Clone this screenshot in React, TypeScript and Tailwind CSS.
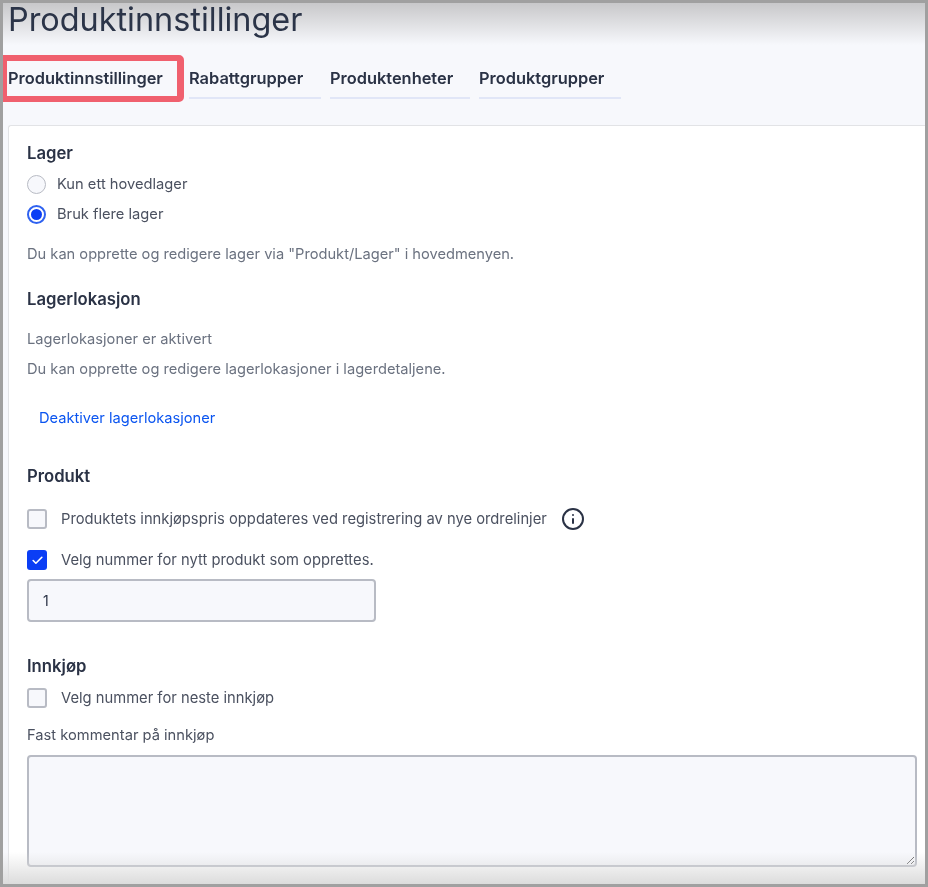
import React from 'react';
import { Check, Info } from 'lucide-react';

const tabs = [
  { label: 'Rabattgrupper', width: 'w-[132px]' },
  { label: 'Produktenheter', width: 'w-[140px]' },
  { label: 'Produktgrupper', width: 'w-[142px]' },
];

const Heading = ({ children, className = '' }: { children: React.ReactNode; className?: string }) => (
  <h2 className={`text-[16.7px] leading-[22px] font-semibold text-[#2a3245] ${className}`}>{children}</h2>
);

const Radio = ({ label, checked = false }: { label: string; checked?: boolean }) => (
  <label className="flex h-[30px] items-center">
    {checked ? (
      <span className="flex h-[19px] w-[19px] items-center justify-center rounded-full border-2 border-[#2f62f0] bg-white">
        <span className="h-[11px] w-[11px] rounded-full bg-[#0b3ef5]" />
      </span>
    ) : (
      <span className="h-[19px] w-[19px] rounded-full border border-[#b8bbc4] bg-[#f7f8fc]" />
    )}
    <span className="ml-[11px] text-[14.7px] text-[#4b5160]">{label}</span>
  </label>
);

const Checkbox = ({ label, checked = false }: { label: string; checked?: boolean }) => (
  <label className="flex items-center">
    {checked ? (
      <span className="flex h-[20px] w-[20px] items-center justify-center rounded-[3px] bg-[#0b3ef5]">
        <Check size={13} strokeWidth={3} className="text-white" />
      </span>
    ) : (
      <span className="h-[20px] w-[20px] rounded-[3px] border-2 border-[#b8bbc4] bg-[#f7f8fc]" />
    )}
    <span className="ml-[14px] text-[14.75px] text-[#4b5160]">{label}</span>
  </label>
);

export default function App() {
  return (
    <div className="relative h-[887px] w-[928px] overflow-hidden border-[3px] border-[#a0a0a0] bg-[#f7f8fc] font-['Inter',sans-serif] blur-[0.5px]">
      {/* fade at top and bottom of the screenshot */}
      <div className="pointer-events-none absolute inset-x-0 top-0 h-[42px] bg-gradient-to-b from-[#c8c8ca] to-[#f7f8fc]" />
      <div className="pointer-events-none absolute inset-x-0 bottom-0 z-10 h-[32px] bg-gradient-to-b from-transparent to-[#dcdcdc]" />

      <h1 className="relative pl-[5px] text-[32.4px] leading-[33px] text-[#2b3448]">Produktinnstillinger</h1>

      <div className="relative mt-[23px] flex h-[40px] pl-[5px]">
        <div className="absolute left-0 top-[-4px] h-[47px] w-[181px] rounded-r-[5px] border-y-[6px] border-r-[7px] border-l-[4px] border-[#f0606e]" />
        <div className="w-[181px] pt-[8px] text-[16.4px] leading-[22px] font-semibold text-[#2a3245]">Produktinnstillinger</div>
        {tabs.map((tab) => (
          <div
            key={tab.label}
            className={`mr-[9px] border-b-2 border-[#e1e6f7] pt-[8px] text-[16.4px] leading-[22px] font-semibold text-[#2a3245] ${tab.width}`}
          >
            {tab.label}
          </div>
        ))}
      </div>

      <main className="ml-[5px] mt-[26px] h-[760px] rounded-tl-[3px] border-l border-t border-[#e2e3e6] bg-white pl-[18px] pt-[16px]">
        <Heading>Lager</Heading>
        <div className="mt-[5px]">
          <Radio label="Kun ett hovedlager" />
          <Radio label="Bruk flere lager" checked />
        </div>
        <p className="mt-[15px] text-[14.65px] leading-[20px] text-[#6b7280]">
          Du kan opprette og redigere lager via "Produkt/Lager" i hovedmenyen.
        </p>

        <Heading className="mt-[24px]">Lagerlokasjon</Heading>
        <p className="mt-[19px] text-[14.65px] leading-[20px] text-[#6b7280]">Lagerlokasjoner er aktivert</p>
        <p className="mt-[10px] text-[14.65px] leading-[20px] text-[#6b7280]">
          Du kan opprette og redigere lagerlokasjoner i lagerdetaljene.
        </p>
        <a className="ml-[12px] mt-[29px] block text-[14.65px] leading-[20px] text-[#0b55f0]">Deaktiver lagerlokasjoner</a>

        <Heading className="mt-[37px]">Produkt</Heading>
        <div className="mt-[20px] flex items-center">
          <Checkbox label="Produktets innkjøpspris oppdateres ved registrering av nye ordrelinjer" />
          <Info size={24} strokeWidth={2} className="ml-[14px] text-[#2a3245]" />
        </div>
        <div className="mt-[18px]">
          <Checkbox label="Velg nummer for nytt produkt som opprettes." checked />
        </div>
        <div className="mt-[8px] flex h-[43px] w-[349px] items-center rounded-[4px] border-2 border-[#b8bbc4] bg-[#f7f8fc] pl-[14px] text-[14px] text-[#2a3245]">
          1
        </div>

        <Heading className="mt-[33px]">Innkjøp</Heading>
        <div className="mt-[10px]">
          <Checkbox label="Velg nummer for neste innkjøp" />
        </div>
        <p className="mt-[16px] text-[14.7px] leading-[20px] text-[#4b5160]">Fast kommentar på innkjøp</p>
        <textarea
          readOnly
          className="mt-[10px] block h-[112px] w-[890px] rounded-[4px] border-2 border-[#b8bbc4] bg-[#f7f8fc]"
        />
      </main>
    </div>
  );
}
